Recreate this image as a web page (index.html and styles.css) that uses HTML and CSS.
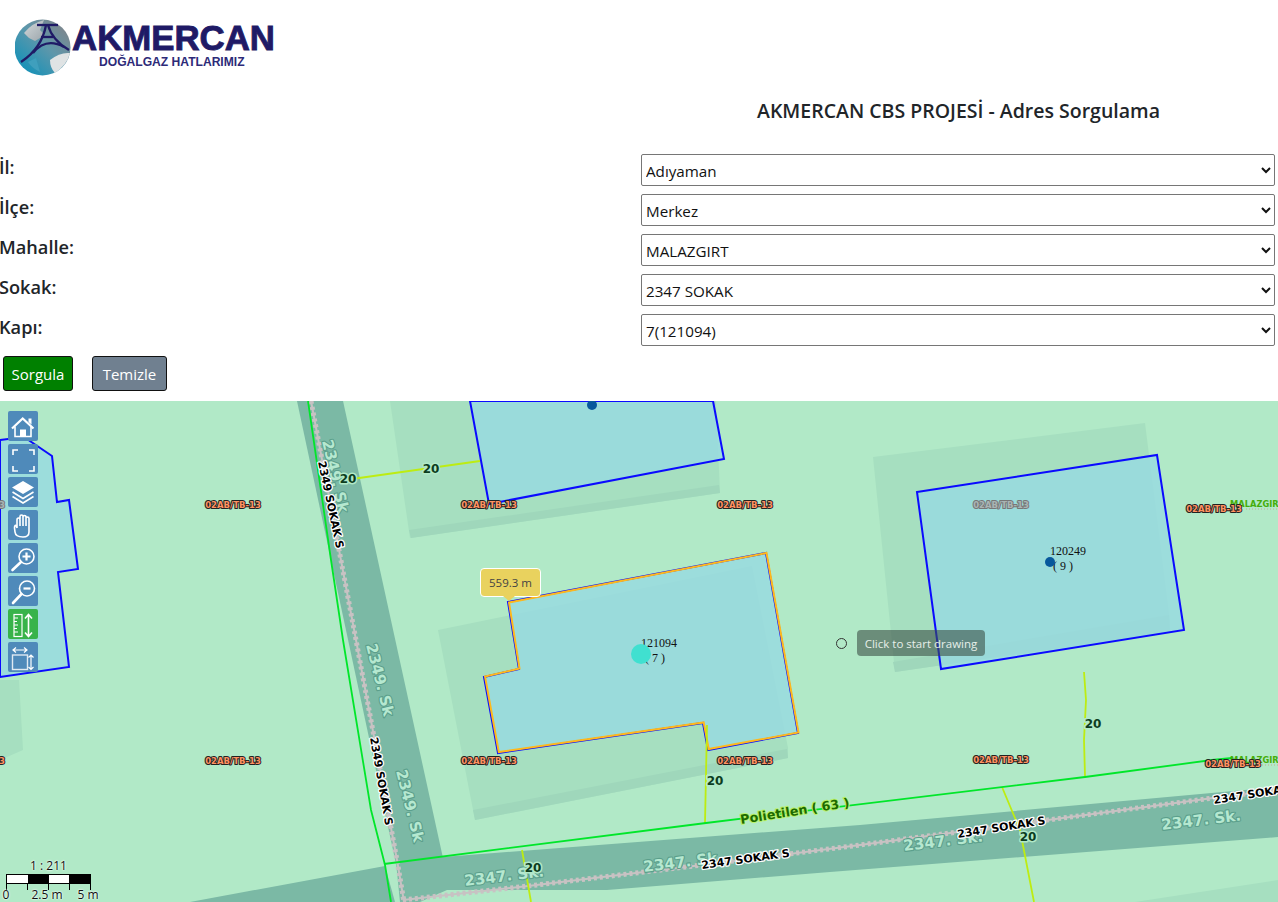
FILE: index.html
```html
<!DOCTYPE html>
<html lang="tr">
<head>
  <meta charset="UTF-8" />
  <meta name="viewport" content="width=device-width, initial-scale=1.0" />
  <title>AKMERCAN CBS PROJESİ - Adres Sorgulama</title>
  <link rel="stylesheet" href="styles.css">
</head>
<body>
  <header class="logo-bar">
    <svg class="logo" width="262" height="62" viewBox="15 17 262 62">
      <defs>
        <linearGradient id="globeFill" x1="0.85" y1="0.05" x2="0.15" y2="0.8">
          <stop offset="0" stop-color="#7f858b" />
          <stop offset="0.5" stop-color="#5d97ab" />
          <stop offset="1" stop-color="#1e92b6" />
        </linearGradient>
        <linearGradient id="landFill" x1="0" y1="0" x2="1" y2="1">
          <stop offset="0" stop-color="#d5dadc" />
          <stop offset="1" stop-color="#9aa4aa" />
        </linearGradient>
      </defs>
      <circle cx="42.5" cy="47.5" r="28" fill="url(#globeFill)" />
      <path d="M24 33 Q32 23 44 20 L40 30 L45 35 L35 41 L29 38 Z" fill="url(#landFill)" />
      <path d="M50 60 Q60 52 70 53 Q67 65 55 73 Q50 68 50 60 Z" fill="#dfe3e4" />
      <path d="M28 62 L36 58 L40 72 Q32 68 28 62 Z" fill="#3f9fbd" />
      <g class="logo-tower">
        <path d="M37 25 H58" />
        <path d="M46 25 Q42 48 21 62" />
        <path d="M48 25 Q52 40 69 50" />
        <path d="M41 37 H53" />
        <path d="M33 53 Q46 37 64 47" />
      </g>
      <text class="logo-name" x="72" y="50">AKMERCAN</text>
      <text class="logo-sub" x="99" y="66">DOĞALGAZ HATLARIMIZ</text>
    </svg>
  </header>

  <div class="title-row">
    <div></div>
    <h2>AKMERCAN CBS PROJESİ - Adres Sorgulama</h2>
  </div>

  <form class="query-form">
    <div class="form-row">
      <label for="il">İl:</label>
      <select id="il"><option>Adıyaman</option></select>
    </div>
    <div class="form-row">
      <label for="ilce">İlçe:</label>
      <select id="ilce"><option>Merkez</option></select>
    </div>
    <div class="form-row">
      <label for="mahalle">Mahalle:</label>
      <select id="mahalle"><option>MALAZGIRT</option></select>
    </div>
    <div class="form-row">
      <label for="sokak">Sokak:</label>
      <select id="sokak"><option>2347 SOKAK</option></select>
    </div>
    <div class="form-row">
      <label for="kapi">Kapı:</label>
      <select id="kapi"><option>7(121094)</option></select>
    </div>
    <div class="form-buttons">
      <button type="button" class="btn-query">Sorgula</button>
      <button type="button" class="btn-clear">Temizle</button>
    </div>
  </form>

  <div class="map">
    <svg class="map-canvas" width="1278" height="501" viewBox="0 401 1278 501">
      <!-- building shadows -->
      <polygon class="shade" points="390,401 716,401 720,493 410,538" />
      <polygon class="shade-dark" points="409,530 719,485 720,493 411,538" />
      <polygon class="shade" points="438,630 752,566 788,748 788,758 475,820" />
      <polygon class="shade-dark" points="473,810 787,749 788,758 475,820" />
      <polygon class="shade" points="873,457 1145,423 1170,622 1170,632 895,672" />
      <polygon class="shade-dark" points="893,662 1169,615 1170,632 895,672" />
      <polygon class="shade" points="0,680 19,680 23,750 0,760" />
      <polygon class="shade" points="1135,902 1278,880 1278,902" />

      <!-- roads -->
      <polygon class="road" points="297,401 343,401 443,858 396,864" />
      <polygon class="road" points="396,862 443,857 860,825 1278,787 1278,837 830,872 607,890 447,890 420,902 400,902" />
      <polygon class="road" points="190,902 385,866 395,902" />
      <g class="road-center">
        <polyline points="311,401 356,640 397,860 404,902" />
        <polyline points="403,900 528,886 702,865 860,845 1213,798 1278,790" />
      </g>
      <g class="road-dash">
        <polyline points="311,401 356,640 397,860 404,902" />
        <polyline points="403,900 528,886 702,865 860,845 1213,798 1278,790" />
      </g>

      <!-- parcels -->
      <polygon class="parcel" points="0,440 24,437 52,456 57,502 69,500 78,569 58,572 69,667 0,677" />
      <polygon class="parcel" points="470,401 489,504 724,459 713,401" />
      <polygon class="parcel" points="917,492 1157,455 1184,630 941,669" />
      <polygon class="parcel" points="508,602 766,553 798,733 708,750 703,723 498,753 484,677 519,669" />
      <polygon class="parcel-selected" points="509,602.5 766.5,553 798.5,732.5 708.7,749 703.7,722.5 498.8,752 485,676.5 519.5,668.5" />

      <!-- gas lines -->
      <g class="line-lime">
        <polyline points="345,480 480,461" />
        <polyline points="1084,672 1086,700 1084,740 1085,776" />
        <polyline points="707,725 705,823" />
        <polyline points="1002,787 1020,830 1034,902" />
        <polyline points="522,850 531,902" />
      </g>
      <g class="line-green">
        <polyline points="308,401 331,560 343,640 371,810 385,865 391,902" />
        <polyline points="384,864 706,823 1085,777 1212,760 1232,758" />
      </g>
      <line class="line-dotted" x1="1246" y1="509" x2="1278" y2="509" />
      <line class="line-dotted" x1="1262" y1="765" x2="1278" y2="765" />

      <!-- pale road names -->
      <text class="road-name" transform="translate(322,441) rotate(77)">2349. Sk</text>
      <text class="road-name" transform="translate(366,645) rotate(76)">2349. Sk</text>
      <text class="road-name" transform="translate(396,771) rotate(76)">2349. Sk</text>
      <text class="road-name" transform="translate(465,886) rotate(-7)">2347. Sk.</text>
      <text class="road-name" transform="translate(644,872) rotate(-7)">2347. Sk.</text>
      <text class="road-name" transform="translate(904,851) rotate(-7)">2347. Sk.</text>
      <text class="road-name" transform="translate(1162,830) rotate(-7)">2347. Sk.</text>

      <!-- street labels -->
      <text class="street" transform="translate(318,462) rotate(78)">2349 SOKAK S</text>
      <text class="street" transform="translate(370,738) rotate(80)">2349 SOKAK S</text>
      <text class="street" transform="translate(702,869) rotate(-8)">2347 SOKAK S</text>
      <text class="street" transform="translate(958,838) rotate(-9)">2347 SOKAK S</text>
      <text class="street" transform="translate(1214,804) rotate(-9)">2347 SOKAK S</text>

      <text class="pipe" transform="translate(741,824) rotate(-9)">Polietilen ( 63 )</text>

      <!-- pipe sizes -->
      <text class="size" x="348" y="483">20</text>
      <text class="size" x="431" y="473">20</text>
      <text class="size" x="1093" y="728">20</text>
      <text class="size" x="715" y="785">20</text>
      <text class="size" x="1028" y="841">20</text>
      <text class="size" x="533" y="872">20</text>

      <!-- district labels -->
      <text class="district" x="1230" y="507">MALAZGIRT</text>
      <text class="district" x="1230" y="763">MALAZGIRT</text>

      <!-- valve codes -->
      <text class="code code-off" x="-23" y="508">02AB/TB-13</text>
      <text class="code" x="233" y="508">02AB/TB-13</text>
      <text class="code" x="489" y="508">02AB/TB-13</text>
      <text class="code" x="745" y="508">02AB/TB-13</text>
      <text class="code code-off" x="1001" y="508">02AB/TB-13</text>
      <text class="code" x="1214" y="512">02AB/TB-13</text>
      <text class="code" x="-23" y="764">02AB/TB-13</text>
      <text class="code" x="233" y="764">02AB/TB-13</text>
      <text class="code" x="489" y="764">02AB/TB-13</text>
      <text class="code" x="745" y="764">02AB/TB-13</text>
      <text class="code" x="1001" y="763">02AB/TB-13</text>
      <text class="code" x="1233" y="767">02AB/TB-13</text>

      <!-- door numbers -->
      <text class="door" x="641" y="647">121094</text>
      <text class="door" x="645" y="662">( 7 )</text>
      <text class="door" x="1050" y="555">120249</text>
      <text class="door" x="1053" y="570">( 9 )</text>

      <!-- dots -->
      <circle class="dot" cx="592" cy="405" r="5" />
      <circle class="dot" cx="1050" cy="562" r="5" />
      <circle class="dot-active" cx="641" cy="654" r="10" />
      <circle class="draw-point" cx="841.5" cy="643.5" r="5" />
    </svg>

    <div class="map-tools">
      <div class="tool">
        <svg width="30" height="30" viewBox="0 0 30 30">
          <path class="ico ico-bold" d="M4 17.5 L14.7 7.5 L25.5 17.5" />
          <path class="ico" d="M7 15.5 V25.5 H23 V15.5" />
          <path class="ico-fill" d="M20.5 7.5 H23.5 V13.5 L20.5 11 Z" />
          <rect class="ico-fill" x="12" y="18.5" width="6" height="7" />
        </svg>
      </div>
      <div class="tool">
        <svg width="30" height="30" viewBox="0 0 30 30">
          <path class="ico" d="M5 11 V6 H10 M21 6 H26 V11 M5 22 V27 H10 M21 27 H26 V22" />
        </svg>
      </div>
      <div class="tool">
        <svg width="30" height="30" viewBox="0 0 30 30">
          <path class="ico-fill" d="M15 4 L26 10.5 L15 17 L4 10.5 Z" />
          <path class="ico" d="M4.5 15 L15 21.5 L25.5 15 M4.5 19.5 L15 26 L25.5 19.5" />
        </svg>
      </div>
      <div class="tool">
        <svg width="30" height="30" viewBox="0 0 30 30">
          <path class="ico" d="M9 18 V10 Q9 8 10.5 8 Q12 8 12 10 V16 M12 9 V6.5 Q12 5 13.5 5 Q15 5 15 6.5 V16 M15 7 Q15 5.5 16.5 5.5 Q18 5.5 18 7 V16 M18 8.5 Q18 7 19.5 7 Q21 7 21 8.5 V22 Q21 27 15 27 Q7.5 27 7 22 L6.5 18 Q6.5 15 8 15.5 L9 18" />
        </svg>
      </div>
      <div class="tool">
        <svg width="30" height="30" viewBox="0 0 30 30">
          <circle class="ico" cx="18.5" cy="13.5" r="7.5" />
          <path class="ico ico-handle" d="M4.5 27 L13 19" />
          <path class="ico ico-bold" d="M14.5 13.5 H22.5 M18.5 9.5 V17.5" />
        </svg>
      </div>
      <div class="tool">
        <svg width="30" height="30" viewBox="0 0 30 30">
          <circle class="ico" cx="19" cy="12.5" r="7.5" />
          <path class="ico ico-handle" d="M5 27 L13.5 18" />
          <path class="ico ico-bold" d="M15.5 12.5 H22.5" />
        </svg>
      </div>
      <div class="tool tool-on">
        <svg width="30" height="30" viewBox="0 0 30 30">
          <rect class="ico ico-thin" x="6" y="5.5" width="8" height="22" />
          <path class="ico ico-thin" d="M6 9 H10 M6 12.5 H9 M6 16 H10 M6 19.5 H9 M6 23 H10" />
          <path class="ico" d="M20.5 6 V27 M17 9.5 L20.5 5.5 L24 9.5 M17 23.5 L20.5 27.5 L24 23.5" />
        </svg>
      </div>
      <div class="tool">
        <svg width="30" height="30" viewBox="0 0 30 30">
          <rect class="ico ico-soft" x="4.5" y="13" width="15" height="14.5" />
          <path class="ico ico-thin" d="M5 8 H19 M8 5.5 L5 8 L8 10.5 M16 5.5 L19 8 L16 10.5" />
          <path class="ico ico-thin" d="M23 13 V27.5 M20.5 15.5 L23 13 L25.5 15.5 M20.5 25 L23 27.5 L25.5 25" />
        </svg>
      </div>
    </div>

    <div class="measure-tip">559.3 m</div>
    <div class="draw-tip">Click to start drawing</div>

    <div class="scale">
      <div class="scale-ratio">1 : 211</div>
      <div class="scale-bar">
        <span class="seg seg-white"></span>
        <span class="seg seg-black"></span>
        <span class="seg seg-white"></span>
        <span class="seg seg-black"></span>
      </div>
      <div class="scale-ticks">
        <i></i><i></i><i></i><i></i><i></i>
      </div>
      <div class="scale-labels">
        <span>0</span>
        <span>2.5 m</span>
        <span>5 m</span>
      </div>
    </div>
  </div>
</body>
</html>
```

FILE: styles.css
```css
html, body {
  margin: 0;
  height: 902px;
  overflow: hidden;
}
body {
  font-family: "Open Sans", "Noto Sans", sans-serif;
  color: #212529;
  background-color: #fff;
}

/* logo */
.logo-bar {
  height: 85px;
  padding: 17px 0 0 15px;
  box-sizing: border-box;
}
.logo {
  display: block;
}
.logo-tower path {
  fill: none;
  stroke: #1f1a66;
  stroke-width: 2.3;
}
.logo-name {
  font-family: "Liberation Sans", sans-serif;
  font-weight: bold;
  font-size: 34.8px;
  fill: #1f1a66;
  stroke: #1f1a66;
  stroke-width: 0.9px;
}
.logo-sub {
  font-family: "Liberation Sans", sans-serif;
  font-weight: bold;
  font-size: 12.1px;
  fill: #2d2a78;
}

/* title */
.title-row {
  display: grid;
  grid-template-columns: 1fr 1fr;
  height: 69px;
}
.title-row h2 {
  margin: 12px 0 0;
  font-size: 19.5px;
  line-height: 28px;
  font-weight: 600;
  text-align: center;
}

/* form */
.query-form {
  display: flex;
  flex-direction: column;
  gap: 8px;
}
.form-row {
  display: grid;
  grid-template-columns: 641px 1fr;
  padding-right: 3px;
  height: 32px;
}
.form-row label {
  font-size: 18.2px;
  font-weight: 600;
  line-height: 26px;
  margin-left: -1px;
}
.form-row select {
  height: 32px;
  width: 100%;
  font-family: inherit;
  font-size: 15.2px;
  padding: 2px 0 0 0;
  background-color: #fff;
  color: #111;
  border: 1px solid #767676;
  border-radius: 2px;
}
.form-buttons {
  display: flex;
  gap: 19px;
  margin: 2px 0 0 3px;
}
.form-buttons button {
  height: 35px;
  padding: 0;
  font-family: inherit;
  font-size: 15px;
  color: #fff;
  border: 1px solid #111;
  border-radius: 3px;
  cursor: pointer;
}
.btn-query {
  width: 70px;
  background-color: #008000;
}
.btn-clear {
  width: 75px;
  background-color: #708090;
}

/* map */
.map {
  position: relative;
  margin-top: 10px;
  height: 501px;
  overflow: hidden;
  background-color: #b1e9c7;
}
.map-canvas {
  display: block;
}
.shade { fill: #a6dfc0; }
.shade-dark { fill: #9fd7bb; }
.road { fill: #7bb9a5; }
.road-center polyline {
  fill: none;
  stroke: #c8c2c3;
  stroke-width: 2;
}
.road-dash polyline {
  fill: none;
  stroke: #c8c2c3;
  stroke-width: 5;
  stroke-dasharray: 3 3;
}
.parcel {
  fill: rgba(151, 217, 225, 0.8);
  stroke: #0a0aff;
  stroke-width: 2;
}
.parcel-selected {
  fill: none;
  stroke: #ffb81c;
  stroke-width: 2;
}
.line-lime polyline {
  fill: none;
  stroke: #bdec12;
  stroke-width: 1.8;
}
.line-green polyline {
  fill: none;
  stroke: #00e62a;
  stroke-width: 1.8;
}
.line-dotted {
  stroke: #c9a890;
  stroke-width: 1;
  stroke-dasharray: 1 2;
}
.dot { fill: #07589c; }
.dot-active { fill: #40e0d0; }
.draw-point {
  fill: none;
  stroke: #333;
  stroke-width: 1;
}

/* map text */
.map-canvas text {
  font-family: "DejaVu Sans", sans-serif;
  paint-order: stroke;
  stroke-linejoin: round;
}
.map-canvas .road-name {
  font-size: 15.2px;
  font-weight: bold;
  fill: #b5e8d0;
  stroke: #5c9f8c;
  stroke-width: 2.2px;
}
.map-canvas .street {
  font-size: 11px;
  font-weight: bold;
  fill: #000;
  stroke: #fff;
  stroke-width: 2.5px;
}
.map-canvas .pipe {
  font-size: 12.7px;
  font-weight: bold;
  fill: #1c6a00;
  stroke: #b9f26a;
  stroke-width: 2px;
}
.map-canvas .size {
  font-size: 12px;
  font-weight: bold;
  text-anchor: middle;
  fill: #0c3d1e;
  stroke: #b1e9c7;
  stroke-width: 3px;
}
.map-canvas .district {
  font-size: 8.3px;
  font-weight: bold;
  fill: #46ad0a;
}
.map-canvas .code {
  font-size: 8.5px;
  font-weight: bold;
  text-anchor: middle;
  fill: #ff9160;
  stroke: #222;
  stroke-width: 2px;
}
.map-canvas .code-off {
  fill: #a9b4b4;
  stroke: #777;
}
.map-canvas .door {
  font-family: "Liberation Serif", serif;
  font-size: 12px;
  fill: #111;
}

/* toolbar */
.map-tools {
  position: absolute;
  left: 8px;
  top: 10px;
  display: flex;
  flex-direction: column;
  gap: 3px;
}
.tool {
  width: 30px;
  height: 30px;
  border-radius: 2px;
  background-color: #4f8aba;
}
.tool svg {
  display: block;
}
.tool-on {
  background-color: #38b34a;
}
.ico {
  fill: none;
  stroke: #fff;
  stroke-width: 1.6;
}
.ico-fill {
  fill: #fff;
}
.ico-thin {
  stroke-width: 1.2;
}
.ico-bold {
  stroke-width: 2.2;
}
.ico-handle {
  stroke-width: 2.6;
  stroke-linecap: round;
}
.ico-soft {
  stroke-width: 1.4;
  stroke: #dfe9f2;
}

/* tooltips */
.measure-tip {
  position: absolute;
  left: 480px;
  top: 167px;
  width: 59px;
  height: 27px;
  line-height: 27px;
  text-align: center;
  font-size: 11.5px;
  color: #444;
  background-color: #e9d25e;
  border: 1px solid #fff;
  border-radius: 4px;
}
.measure-tip::after {
  content: "";
  position: absolute;
  left: 22px;
  top: 27px;
  border-left: 6px solid transparent;
  border-right: 6px solid transparent;
  border-top: 5px solid #e9d25e;
}
.draw-tip {
  position: absolute;
  left: 857px;
  top: 229px;
  width: 128px;
  height: 26px;
  line-height: 27px;
  text-align: center;
  font-size: 11.5px;
  color: #e6efe9;
  background-color: rgba(60, 80, 70, 0.6);
  border-radius: 4px;
}

/* scale line */
.scale {
  position: absolute;
  left: 6px;
  bottom: 0;
  width: 85px;
  font-size: 12px;
  color: #111;
  text-shadow: 0 0 2px #fff, 0 0 2px #fff;
}
.scale-ratio {
  text-align: center;
  line-height: 14px;
  margin-bottom: 1px;
}
.scale-bar {
  display: flex;
  height: 10px;
  border: 1px solid #000;
  box-sizing: border-box;
}
.seg {
  flex: 1;
}
.seg-white { background-color: #fff; }
.seg-black { background-color: #000; }
.scale-ticks {
  display: flex;
  justify-content: space-between;
  height: 6px;
  margin-bottom: -2px;
}
.scale-ticks i {
  width: 1px;
  background-color: #000;
}
.scale-labels {
  display: flex;
  justify-content: space-between;
  line-height: 14px;
  margin: 0 -17px 0 -20px;
}
.scale-labels span {
  width: 40px;
  text-align: center;
}
```
